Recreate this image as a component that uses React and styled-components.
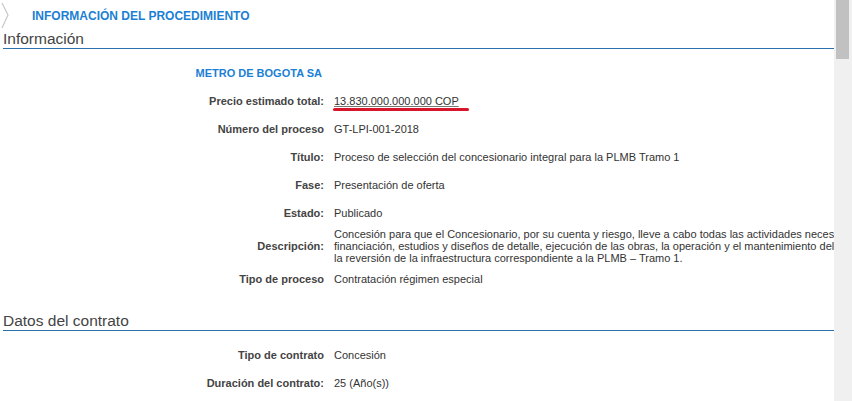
import React from "react";
import styled, { createGlobalStyle } from "styled-components";

const GlobalStyle = createGlobalStyle`
  html, body {
    margin: 0;
    padding: 0;
    background: #fff;
  }
  body {
    font-family: "Liberation Sans", Arial, sans-serif;
    color: #333;
  }
`;

const info = [
  { label: "Precio estimado total:", value: "13.830.000.000.000 COP", marked: true },
  { label: "Número del proceso", value: "GT-LPI-001-2018" },
  {
    label: "Título:",
    value: "Proceso de selección del concesionario integral para la PLMB Tramo 1",
  },
  { label: "Fase:", value: "Presentación de oferta" },
  { label: "Estado:", value: "Publicado" },
  {
    label: "Descripción:",
    lines: [
      "Concesión para que el Concesionario, por su cuenta y riesgo, lleve a cabo todas las actividades necesarias",
      "financiación, estudios y diseños de detalle, ejecución de las obras, la operación y el mantenimiento del sistema,",
      "la reversión de la infraestructura correspondiente a la PLMB – Tramo 1.",
    ],
  },
  { label: "Tipo de proceso", value: "Contratación régimen especial" },
];

const contract = [
  { label: "Tipo de contrato", value: "Concesión" },
  { label: "Duración del contrato:", value: "25 (Año(s))" },
];

const Chevron = () => (
  <svg width="10" height="28" viewBox="0 0 10 28">
    <polyline
      points="2,1 8,13 2,26"
      fill="none"
      stroke="#c8c8c8"
      strokeWidth="1.2"
    />
  </svg>
);

const Field = ({ item }) => (
  <Row>
    <Label>{item.label}</Label>
    {item.lines ? (
      <MultiValue>
        {item.lines.map((l, i) => (
          <div key={i}>{l}</div>
        ))}
      </MultiValue>
    ) : (
      <Value>
        {item.marked ? (
          <Marked>
            <LinkText>{item.value}</LinkText>
            <RedMark />
          </Marked>
        ) : (
          item.value
        )}
      </Value>
    )}
  </Row>
);

const App = () => {
  return (
    <>
      <GlobalStyle />
      <Page>
        <Content>
          <Header>
            <Chevron />
            <HeaderTitle>INFORMACIÓN DEL PROCEDIMIENTO</HeaderTitle>
          </Header>

          <SectionTitle>Información</SectionTitle>
          <Rows>
            <Row>
              <Entity>METRO DE BOGOTA SA</Entity>
              <span />
            </Row>
            {info.map((item) => (
              <Field key={item.label} item={item} />
            ))}
          </Rows>

          <SectionTitle $spaced>Datos del contrato</SectionTitle>
          <Rows>
            {contract.map((item) => (
              <Field key={item.label} item={item} />
            ))}
          </Rows>
        </Content>
        <Scrollbar>
          <Thumb />
        </Scrollbar>
      </Page>
    </>
  );
};

export default App;

const Page = styled.div`
  display: flex;
  width: 852px;
  height: 401px;
  overflow: hidden;
`;

const Content = styled.div`
  flex: 1;
  min-width: 0;
  overflow: hidden;
  padding-left: 3px;
`;

const Header = styled.div`
  display: flex;
  align-items: center;
  height: 30px;
  margin-left: -3px;
  padding-top: 2px;
  box-sizing: border-box;
`;

const HeaderTitle = styled.h1`
  margin: 0 0 0 22px;
  font-size: 12px;
  font-weight: bold;
  color: #1b7fd4;
  line-height: 14px;
`;

const SectionTitle = styled.h2`
  margin: ${(p) => (p.$spaced ? "19px" : "0")} 0 0 0;
  font-size: 15.5px;
  font-weight: normal;
  color: #444;
  line-height: 18px;
  border-bottom: 1px solid #2a72ad;
  white-space: nowrap;
`;

const Rows = styled.div`
  display: flex;
  flex-direction: column;
  margin-top: 10px;
`;

const Row = styled.div`
  display: grid;
  grid-template-columns: 321px 1fr;
  column-gap: 10px;
  align-items: center;
  min-height: 28px;
  font-size: 11px;
  line-height: 14px;
`;

const Label = styled.div`
  text-align: right;
  font-weight: bold;
  color: #444;
  white-space: nowrap;
`;

const Entity = styled.div`
  text-align: right;
  font-weight: bold;
  color: #1b7fd4;
  padding-right: 2px;
`;

const Value = styled.div`
  color: #333;
  white-space: nowrap;
`;

const MultiValue = styled.div`
  color: #333;
  white-space: nowrap;
  line-height: 12px;
  margin: 1px 0;
`;

const Marked = styled.span`
  position: relative;
  display: inline-block;
`;

const LinkText = styled.span`
  text-decoration: underline;
  text-decoration-color: #777;
`;

const RedMark = styled.span`
  position: absolute;
  left: -1px;
  right: -10px;
  top: 14px;
  height: 3px;
  border-radius: 2px;
  background: #d8162b;
`;

const Scrollbar = styled.div`
  flex: 0 0 18px;
  background: #f0f0f0;
  padding: 0 3px 0 2px;
  box-sizing: border-box;
`;

const Thumb = styled.div`
  height: 59px;
  background: #c1c1c1;
`;
